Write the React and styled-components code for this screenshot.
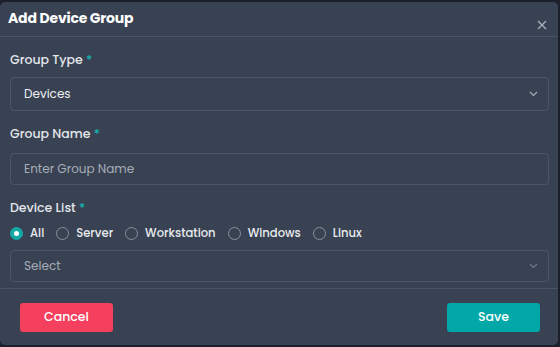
import React from 'react';
import styled, { createGlobalStyle } from 'styled-components';

const Global = createGlobalStyle`
    html, body {
        margin: 0;
        padding: 0;
        background: #1b202c;
        font-family: Poppins, Inter, "Noto Sans", sans-serif;
    }
    * { box-sizing: border-box; }
`;

const Backdrop = styled.div`
    width: 560px;
    height: 347px;
    padding-top: 2px;
    background: #1b202c;
`;

const Modal = styled.div`
    width: 558px;
    height: 343px;
    background: #394252;
    border-radius: 5px;
    display: flex;
    flex-direction: column;
`;

const Header = styled.div`
    height: 35px;
    padding: 0 11px 0 8px;
    display: flex;
    align-items: center;
    justify-content: space-between;
    border-bottom: 1px solid #4b5466;
`;

const Title = styled.h2`
    margin: 0;
    margin-top: -2px;
    font-size: 14px;
    font-weight: 700;
    color: #ffffff;
    letter-spacing: -0.2px;
`;

const Close = styled.button`
    border: 0;
    background: none;
    padding: 0;
    margin-top: 11px;
    display: flex;
    color: #aeb4bf;
`;

const Body = styled.div`
    flex: 1;
    padding: 15px 9px 0 10px;
    display: flex;
    flex-direction: column;
    border-bottom: 1px solid #4b5466;
`;

const Label = styled.div`
    font-size: 12.5px;
    font-weight: 500;
    color: #e3e6eb;
    height: 16px;
    line-height: 16px;
    margin-bottom: ${p => p.$gap}px;
    span { color: #14b3b0; }
`;

const Field = styled.div`
    height: ${p => p.$h}px;
    border: 1px solid #4d5668;
    border-radius: 4px;
    padding: 0 10px 0 13px;
    display: flex;
    align-items: center;
    justify-content: space-between;
    font-size: 12px;
    color: ${p => (p.$muted ? '#a6acb8' : '#eef0f3')};
    margin-bottom: ${p => p.$mb}px;
`;

const Chevron = styled.svg`
    color: ${p => (p.$dim ? '#737b8a' : '#aab0bb')};
`;

const Radios = styled.div`
    display: flex;
    align-items: center;
    gap: 12px;
    height: 18px;
    margin-bottom: 8px;
`;

const RadioItem = styled.label`
    display: flex;
    align-items: center;
    gap: 7px;
    font-size: 11.6px;
    font-weight: 500;
    color: #e8ebef;
`;

const Dot = styled.span`
    width: 13px;
    height: 13px;
    border-radius: 50%;
    border: 1px solid ${p => (p.$on ? '#14a9a6' : '#8a919d')};
    background: ${p => (p.$on ? '#14a9a6' : 'transparent')};
    display: flex;
    align-items: center;
    justify-content: center;
    &::after {
        content: '';
        width: 5px;
        height: 5px;
        border-radius: 50%;
        background: ${p => (p.$on ? '#ffffff' : 'transparent')};
    }
`;

const Footer = styled.div`
    height: 56px;
    padding: 0 18px 0 20px;
    display: flex;
    align-items: center;
    justify-content: space-between;
`;

const Button = styled.button`
    width: 93px;
    height: 29px;
    border: 0;
    border-radius: 3px;
    background: ${p => p.$bg};
    color: #ffffff;
    font-family: inherit;
    font-size: 12.5px;
    font-weight: 500;
`;

function Arrow({ dim }) {
    return (
        <Chevron $dim={dim} width="9" height="6" viewBox="0 0 9 6" fill="none">
            <path d="M1 1l3.5 3.5L8 1" stroke="currentColor" strokeWidth="1.1" />
        </Chevron>
    );
}

const types = ['All', 'Server', 'Workstation', 'Windows', 'Linux'];

function App() {
    return (
        <>
            <Global />
            <Backdrop>
                <Modal>
                    <Header>
                        <Title>Add Device Group</Title>
                        <Close>
                            <svg width="10" height="10" viewBox="0 0 10 10">
                                <path d="M1 1l8 8M9 1L1 9" stroke="currentColor" strokeWidth="1.2" />
                            </svg>
                        </Close>
                    </Header>
                    <Body>
                        <Label $gap={9}>Group Type <span>*</span></Label>
                        <Field $h={34} $mb={15}>
                            Devices
                            <Arrow />
                        </Field>
                        <Label $gap={11}>Group Name <span>*</span></Label>
                        <Field $h={32} $muted $mb={15}>Enter Group Name</Field>
                        <Label $gap={8}>Device List <span>*</span></Label>
                        <Radios>
                            {types.map((t, i) => (
                                <RadioItem key={t}>
                                    <Dot $on={i === 0} />
                                    {t}
                                </RadioItem>
                            ))}
                        </Radios>
                        <Field $h={32} $muted $mb={0}>
                            Select
                            <Arrow dim />
                        </Field>
                    </Body>
                    <Footer>
                        <Button $bg="#f43f5e">Cancel</Button>
                        <Button $bg="#02a7a7">Save</Button>
                    </Footer>
                </Modal>
            </Backdrop>
        </>
    );
}

export default App;
